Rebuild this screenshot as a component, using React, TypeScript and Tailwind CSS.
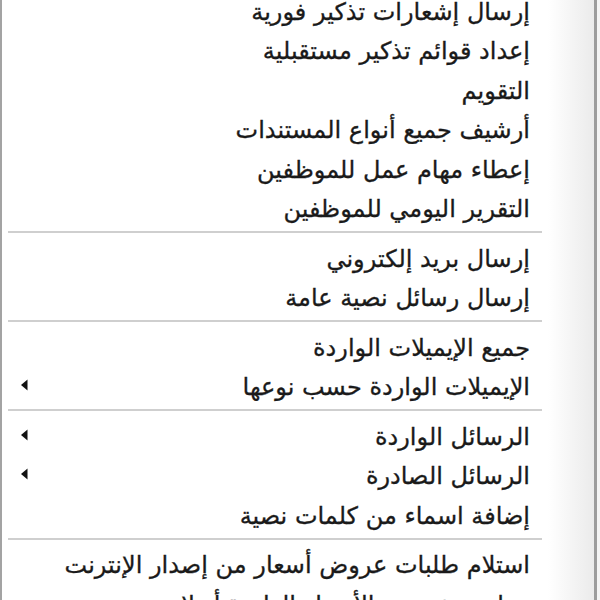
import React from 'react'

type Entry = { label: string; sub?: boolean } | 'sep'

const entries: Entry[] = [
  { label: 'إرسال إشعارات تذكير فورية' },
  { label: 'إعداد قوائم تذكير مستقبلية' },
  { label: 'التقويم' },
  { label: 'أرشيف جميع أنواع المستندات' },
  { label: 'إعطاء مهام عمل للموظفين' },
  { label: 'التقرير اليومي للموظفين' },
  'sep',
  { label: 'إرسال بريد إلكتروني' },
  { label: 'إرسال رسائل نصية عامة' },
  'sep',
  { label: 'جميع الإيميلات الواردة' },
  { label: 'الإيميلات الواردة حسب نوعها', sub: true },
  'sep',
  { label: 'الرسائل الواردة', sub: true },
  { label: 'الرسائل الصادرة', sub: true },
  { label: 'إضافة اسماء من كلمات نصية' },
  'sep',
  { label: 'استلام طلبات عروض أسعار من إصدار الإنترنت' },
  { label: 'مراجعة عروض الأسعار الواردة أونلاين' },
]

const SubArrow = () => (
  <svg width="8" height="12" viewBox="0 0 8 12" className="shrink-0">
    <polygon points="7.5,0.5 7.5,11.5 1,6" fill="#111" />
  </svg>
)

export default function App() {
  return (
    <div className="w-[600px] h-[600px] overflow-hidden bg-white flex">
      <div className="w-[2px] bg-[#a3a3a3]" />
      <div
        dir="rtl"
        className="flex-1 flex flex-col mt-[-10px] text-[#1a1a1a] text-[24px] [-webkit-text-stroke:0.3px_#1a1a1a]"
        style={{ fontFamily: '"DejaVu Sans", "Noto Sans", sans-serif' }}
      >
        {entries.map((e, i) =>
          e === 'sep' ? (
            <div key={i} className="h-[10px] flex items-center shrink-0 px-[6px]">
              <div className="h-[2px] w-full bg-[#cfcfcf]" />
            </div>
          ) : (
            <div key={i} className="h-[39.5px] shrink-0 flex items-center pr-[18px] pl-[18px]">
              <span className="whitespace-nowrap leading-none pt-[4px]">{e.label}</span>
              <div className="flex-1" />
              {e.sub && <SubArrow />}
            </div>
          )
        )}
      </div>
      <div className="w-[46px] bg-gradient-to-r from-white to-[#ebebeb]" />
      <div className="w-[3px] bg-[#9c9c9c]" />
      <div className="w-[3px] bg-[#f4f4f4]" />
    </div>
  )
}
